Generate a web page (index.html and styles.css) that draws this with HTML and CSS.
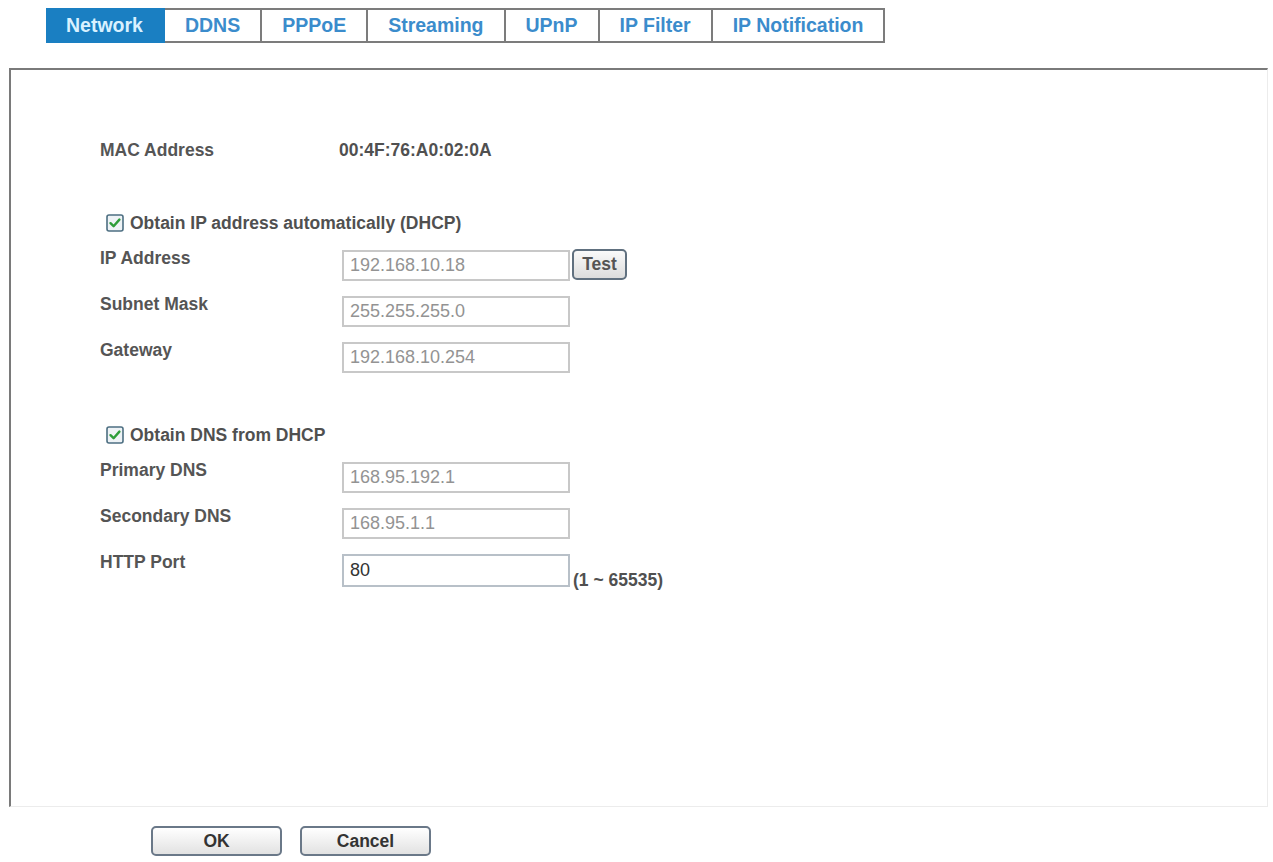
FILE: index.html
```html
<!DOCTYPE html>
<html lang="en">
<head>
    <meta charset="UTF-8">
    <title>Network</title>
    <link rel="stylesheet" href="styles.css">
</head>
<body>
    <div class="tabs">
        <a class="tab active" href="#">Network</a>
        <a class="tab" href="#">DDNS</a>
        <a class="tab" href="#">PPPoE</a>
        <a class="tab" href="#">Streaming</a>
        <a class="tab" href="#">UPnP</a>
        <a class="tab" href="#">IP Filter</a>
        <a class="tab" href="#">IP Notification</a>
    </div>

    <div class="panel">
        <div class="row mac-row">
            <span class="label">MAC Address</span>
            <span class="value">00:4F:76:A0:02:0A</span>
        </div>

        <label class="check-row first-check">
            <span class="checkbox">
                <svg width="18" height="18" viewBox="0 0 18 18">
                    <rect x="1" y="1" width="16" height="16" rx="2" fill="#eef3f6" stroke="#4d6f82" stroke-width="1.6"/>
                    <path d="M4.5 9.2 L7.6 12.2 L13.4 5.6" fill="none" stroke="#2e9e3a" stroke-width="2.4" stroke-linecap="round" stroke-linejoin="round"/>
                </svg>
            </span>
            Obtain IP address automatically (DHCP)
        </label>

        <div class="row field-row first-field">
            <span class="label">IP Address</span>
            <input class="field" type="text" value="192.168.10.18" disabled>
            <button class="test-btn">Test</button>
        </div>
        <div class="row field-row">
            <span class="label">Subnet Mask</span>
            <input class="field" type="text" value="255.255.255.0" disabled>
        </div>
        <div class="row field-row">
            <span class="label">Gateway</span>
            <input class="field" type="text" value="192.168.10.254" disabled>
        </div>

        <label class="check-row second-check">
            <span class="checkbox">
                <svg width="18" height="18" viewBox="0 0 18 18">
                    <rect x="1" y="1" width="16" height="16" rx="2" fill="#eef3f6" stroke="#4d6f82" stroke-width="1.6"/>
                    <path d="M4.5 9.2 L7.6 12.2 L13.4 5.6" fill="none" stroke="#2e9e3a" stroke-width="2.4" stroke-linecap="round" stroke-linejoin="round"/>
                </svg>
            </span>
            Obtain DNS from DHCP
        </label>

        <div class="row field-row first-field">
            <span class="label">Primary DNS</span>
            <input class="field" type="text" value="168.95.192.1" disabled>
        </div>
        <div class="row field-row">
            <span class="label">Secondary DNS</span>
            <input class="field" type="text" value="168.95.1.1" disabled>
        </div>
        <div class="row field-row">
            <span class="label">HTTP Port</span>
            <input class="field active-field" type="text" value="80">
            <span class="range">(1 ~ 65535)</span>
        </div>
    </div>

    <div class="actions">
        <button class="action-btn">OK</button>
        <button class="action-btn">Cancel</button>
    </div>
</body>
</html>
```

FILE: styles.css
```css
body {
    margin: 0;
    background-color: #FFFFFF;
    font-family: "Liberation Sans", Arial, sans-serif;
    color: #505050;
}

.tabs {
    display: flex;
    margin: 8px 0 0 46px;
}

.tab {
    display: block;
    height: 31px;
    line-height: 31px;
    padding: 0 20px;
    border: 2px solid #7c7c7c;
    border-left: none;
    font-size: 19.5px;
    font-weight: bold;
    color: #3b8ccc;
    text-decoration: none;
}

.tab.active {
    background-color: #1a7fc2;
    border-color: #1a7fc2;
    color: #d9f1ff;
}

.panel {
    margin: 25px 0 0 9px;
    width: 1259px;
    height: 739px;
    padding: 70px 0 0 89px;
    box-sizing: border-box;
    border-top: 2px solid #7a7a7a;
    border-left: 2px solid #7a7a7a;
    border-right: 1px solid #ececec;
    border-bottom: 1px solid #ececec;
}

.row {
    display: flex;
    align-items: flex-start;
}

.label {
    width: 242px;
    font-size: 17.5px;
    font-weight: bold;
    line-height: 20px;
    color: #555555;
}

.value {
    margin-left: -3px;
    font-size: 17.5px;
    font-weight: bold;
    line-height: 20px;
    color: #505050;
}

.check-row {
    display: flex;
    align-items: center;
    height: 20px;
    margin-left: 6px;
    font-size: 17.5px;
    font-weight: bold;
    color: #505050;
}

.first-check {
    margin-top: 53px;
}

.second-check {
    margin-top: 39px;
}

.checkbox {
    display: flex;
    margin-right: 6px;
}

.field-row {
    height: 46px;
}

.first-field {
    margin-top: 15px;
}

.field {
    width: 228px;
    height: 31px;
    margin: 2px 0 0 0;
    padding: 0 6px;
    box-sizing: border-box;
    border: 2px solid #c8c8c8;
    background-color: #FFFFFF;
    font-family: "Liberation Sans", Arial, sans-serif;
    font-size: 18px;
    color: #939393;
}

.active-field {
    height: 33px;
    border-color: #b8c0c8;
    color: #333333;
}

.test-btn {
    width: 55px;
    height: 31px;
    margin: 1px 0 0 2px;
    padding: 0;
    border: 2px solid #60707f;
    border-radius: 5px;
    background: linear-gradient(#fafafa, #dcdcdc);
    font-family: "Liberation Sans", Arial, sans-serif;
    font-size: 17.5px;
    font-weight: bold;
    color: #555555;
}

.range {
    align-self: flex-end;
    margin: 0 0 7px 3px;
    font-size: 17.5px;
    font-weight: bold;
    color: #505050;
}

.actions {
    display: flex;
    gap: 18px;
    margin: 19px 0 0 151px;
}

.action-btn {
    width: 131px;
    height: 30px;
    padding: 0;
    border: 2px solid #6a7888;
    border-radius: 5px;
    background: linear-gradient(#ffffff, #e2e2e2);
    font-family: "Liberation Sans", Arial, sans-serif;
    font-size: 17.5px;
    font-weight: bold;
    color: #333333;
}
```
